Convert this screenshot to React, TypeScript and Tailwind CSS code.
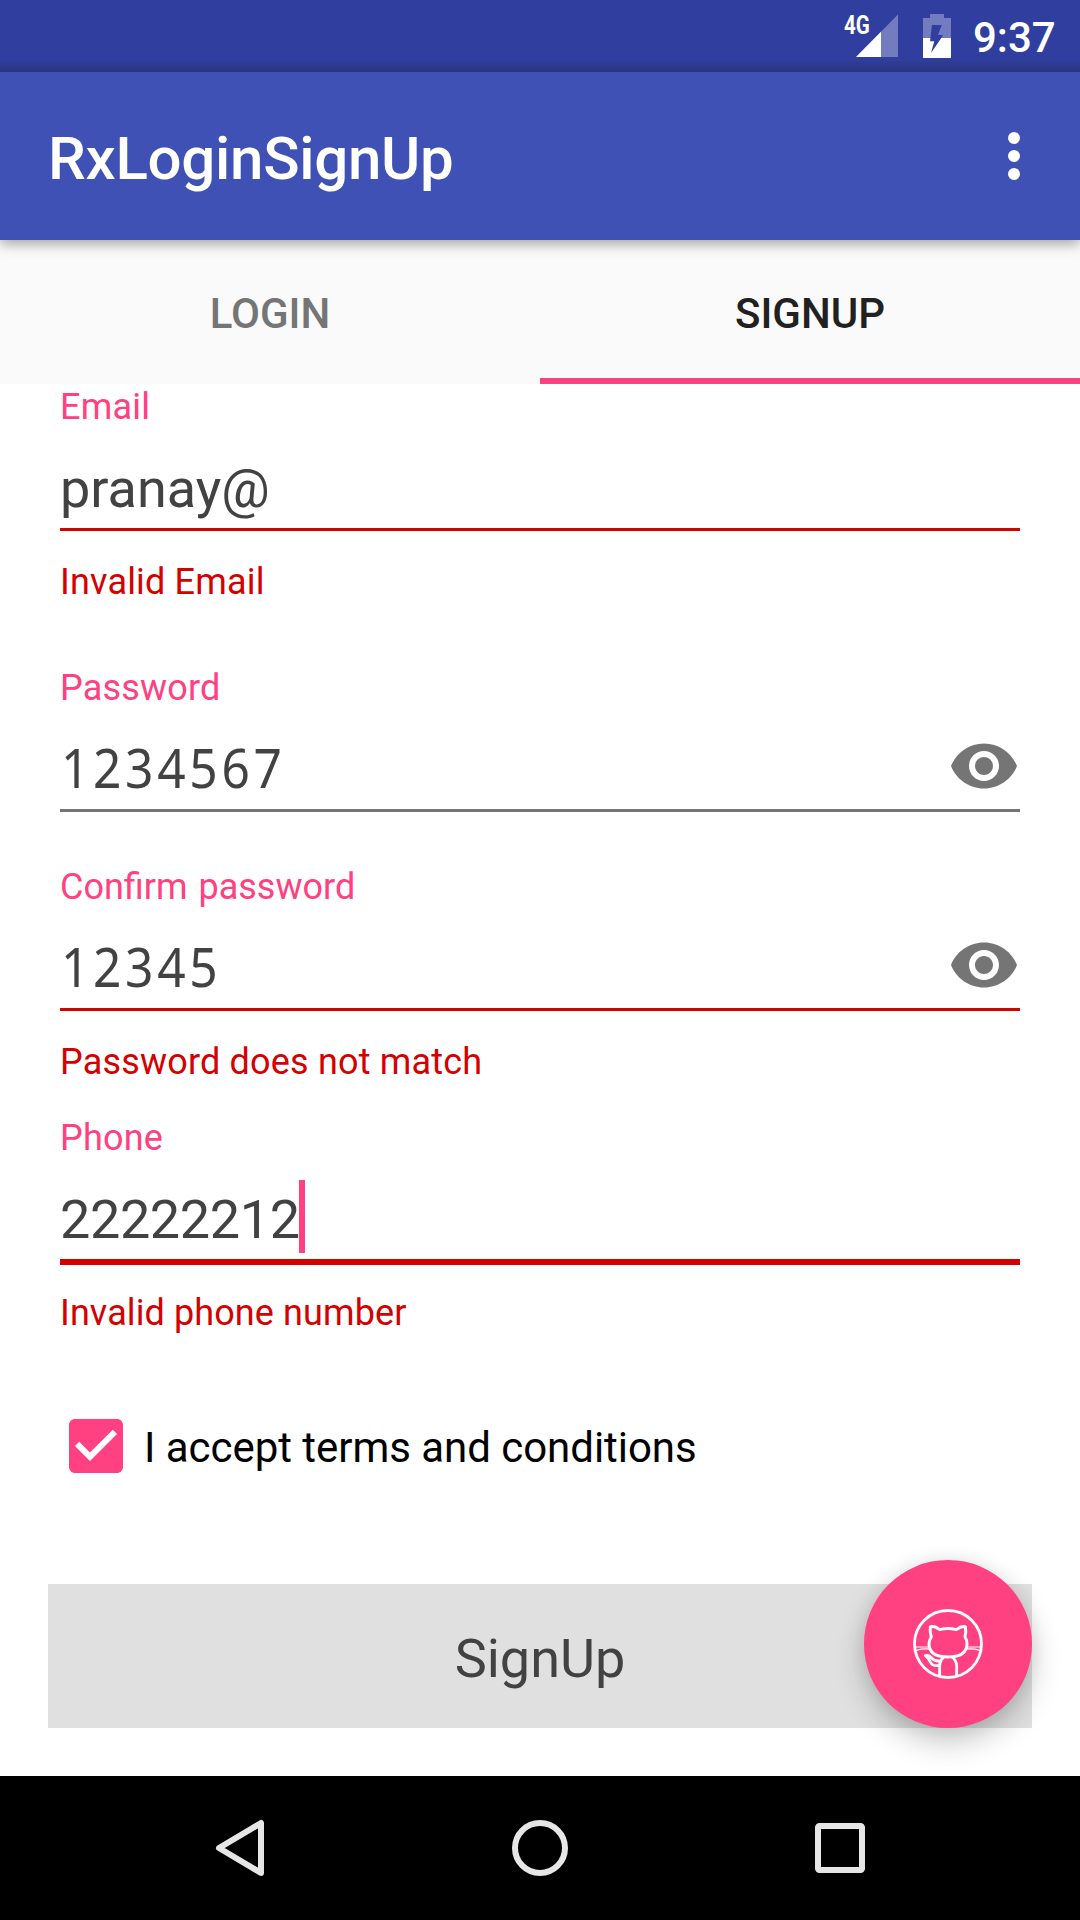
import type { ReactNode } from "react";

type FieldProps = {
  label: string;
  value: string;
  error?: string;
  password?: boolean;
  focused?: boolean;
  className?: string;
};

function EyeIcon() {
  return (
    <svg viewBox="0 0 24 24" className="mt-[21px] size-[72px] shrink-0 fill-[#757575]">
      <path d="M12 4.5C7 4.5 2.73 7.61 1 12c1.73 4.39 6 7.5 11 7.5s9.27-3.11 11-7.5c-1.73-4.39-6-7.5-11-7.5zM12 17c-2.76 0-5-2.24-5-5s2.24-5 5-5 5 2.24 5 5-2.24 5-5 5zm0-8c-1.66 0-3 1.34-3 3s1.34 3 3 3 3-1.34 3-3-1.34-3-3-3z" />
    </svg>
  );
}

function Field({ label, value, error, password, focused, className = "" }: FieldProps) {
  const line = focused ? "h-1.5 bg-[#d50000]" : error ? "h-[3px] bg-[#d50000]" : "h-[3px] bg-[#757575]";
  const spacing = label.includes(" ") ? "[word-spacing:2px]" : "tracking-[.2px]";
  return (
    <div className={className}>
      <div className={`h-[42px] text-[36px] leading-[42px] text-[#ff4081] ${spacing}`}>{label}</div>
      <div className="flex h-[100px] justify-between text-[54px] leading-[79px] text-[#424242]">
        {password ? (
          <span className="origin-left scale-x-[.92] pt-[19px] pl-px font-['Noto_Sans',sans-serif] tracking-[4px]">{value}</span>
        ) : (
          <span className={focused ? "relative pt-[21px] tracking-[-.4px]" : "relative pt-[21px]"}>
            {value}
            {focused && <span className="absolute top-[21px] -right-[5px] h-[73px] w-1.5 bg-[#ff4081]" />}
          </span>
        )}
        {password && <EyeIcon />}
      </div>
      <div className={line} />
      {error && (
        <div
          className={
            focused
              ? "mt-[27px] text-[36px] leading-[42px] tracking-[.1px] text-[#d50000]"
              : "mt-[30px] text-[36px] leading-[42px] tracking-[.18px] text-[#d50000]"
          }
        >
          {error}
        </div>
      )}
    </div>
  );
}

function StatusBar() {
  return (
    <div className="flex h-[72px] bg-[#303f9f] bg-linear-to-b from-[#303f9f] from-82% to-[#29347f] pl-[844px] text-white">
      <div className="relative h-[72px] w-[54px]">
        <svg viewBox="0 0 54 72" className="h-[72px] w-[54px]">
          <path d="M12 57L54 14.5V57z" fill="#fff" fillOpacity=".32" />
          <path d="M12 57L37 31.7V57z" fill="#fff" />
        </svg>
        <span className="absolute top-[10px] left-0 origin-left scale-x-[.79] text-[26px] leading-[30px] font-bold">4G</span>
      </div>
      <svg viewBox="0 0 28 72" className="ml-[25px] h-[72px] w-7">
        <path d="M0 18h7v-4h14v4h7v20H18.300L20 35h-5l3.700-10H9L7.400 38H0z" fill="#fff" fillOpacity=".32" />
        <path d="M0 38h7.400L7 41.300h4.300L8 53l10.300-15H28v20H0z" fill="#fff" />
      </svg>
      <span className="mt-2 ml-[22px] text-[42px] leading-[60px] font-medium">9:37</span>
    </div>
  );
}

function Tab({ children, active }: { children: ReactNode; active?: boolean }) {
  return (
    <div
      className={
        active
          ? "flex-1 border-b-6 border-[#ff4081] pt-[49px] text-center text-[42px] leading-[49px] font-medium text-[#212121]"
          : "flex-1 pt-[49px] text-center text-[42px] leading-[49px] font-medium text-[#757575]"
      }
    >
      {children}
    </div>
  );
}

function OctocatIcon() {
  return (
    <svg viewBox="219 237 210 210" className="size-[70px]" fill="none" stroke="#fff" strokeLinecap="round" strokeLinejoin="round">
      <circle cx="324" cy="342" r="100.500" strokeWidth="8.500" />
      <path
        d="M271 290Q286 288 299 299Q324 292 349 299Q363 288 376 290Q379 305 375 321Q382 331 381 342Q380 381 324 381Q268 381 267 342Q267 331 274 321Q269 305 271 290z"
        strokeWidth="9"
      />
      <path d="M299 437V407Q300 390 311 382M350 437V407Q348 390 338 382M299 407H290Q276 407 271 396Q267 385 256 377Q267 374 275 384Q282 394 298 393" strokeWidth="8.500" />
      <path d="M226 351H266M228 361Q245 356 269 357M382 351H422M379 357Q403 356 420 361" strokeWidth="3.500" />
    </svg>
  );
}

export default function App() {
  return (
    <div className="flex h-[1920px] w-[1080px] flex-col overflow-hidden bg-white font-[Roboto,sans-serif]">
      <StatusBar />
      <header className="relative z-10 flex h-[168px] items-center justify-between bg-[#3f51b5] pr-[60px] pl-12 shadow-[0_4px_12px_rgba(0,0,0,0.35)] [clip-path:inset(0_0_-30px_0)]">
        <h1 className="pt-[5px] text-[60px] leading-[70px] font-medium tracking-[-.28px] text-white">RxLoginSignUp</h1>
        <div className="flex flex-col gap-1.5">
          <span className="size-3 rounded-full bg-white" />
          <span className="size-3 rounded-full bg-white" />
          <span className="size-3 rounded-full bg-white" />
        </div>
      </header>
      <nav className="flex h-[144px] bg-[#fafafa]">
        <Tab>LOGIN</Tab>
        <Tab active>SIGNUP</Tab>
      </nav>
      <main className="relative h-[1392px] px-[60px] pt-[2px]">
        <Field label="Email" value="pranay@" error="Invalid Email" />
        <Field className="mt-16" label="Password" value="1234567" password />
        <Field className="mt-[54px]" label="Confirm password" value="12345" error="Password does not match" password />
        <Field className="mt-[34px]" label="Phone" value="22222212" error="Invalid phone number" focused />
        <label className="mt-[76px] flex h-[72px] items-center gap-3 text-[42px] leading-[49px] text-black">
          <svg viewBox="0 0 24 24" className="size-[72px] fill-[#ff4081]">
            <path d="M19 3H5c-1.110 0-2 .9-2 2v14c0 1.100.89 2 2 2h14c1.110 0 2-.9 2-2V5c0-1.100-.89-2-2-2zm-9 14l-5-5 1.410-1.410L10 14.170l7.590-7.590L19 8l-9 9z" />
          </svg>
          <span className="pt-[3px] tracking-[-.04px]">I accept terms and conditions</span>
        </label>
        <button className="-mx-3 mt-[102px] block h-[144px] w-[984px] bg-[#e0e0e0] pt-[5px] text-center text-[54px] leading-[63px] text-[#424242]">
          SignUp
        </button>
        <button className="absolute right-12 bottom-12 flex size-[168px] items-center justify-center rounded-full bg-[#ff4081] shadow-[0_14px_30px_rgba(0,0,0,0.22),0_0_18px_rgba(0,0,0,0.07)]">
          <OctocatIcon />
        </button>
      </main>
      <footer className="flex h-36 items-center justify-center gap-[228px] bg-black">
        <svg viewBox="0 0 72 72" className="size-[72px]" fill="none" stroke="#e6e6e6" strokeWidth="6" strokeLinejoin="round">
          <path d="M57 11V61L15 36z" />
        </svg>
        <svg viewBox="0 0 72 72" className="size-[72px]" fill="none" stroke="#e6e6e6" strokeWidth="6">
          <circle cx="36" cy="36" r="25" />
        </svg>
        <svg viewBox="0 0 72 72" className="size-[72px]" fill="none" stroke="#e6e6e6" strokeWidth="6">
          <rect x="14" y="14" width="44" height="44" rx="1.500" />
        </svg>
      </footer>
    </div>
  );
}
